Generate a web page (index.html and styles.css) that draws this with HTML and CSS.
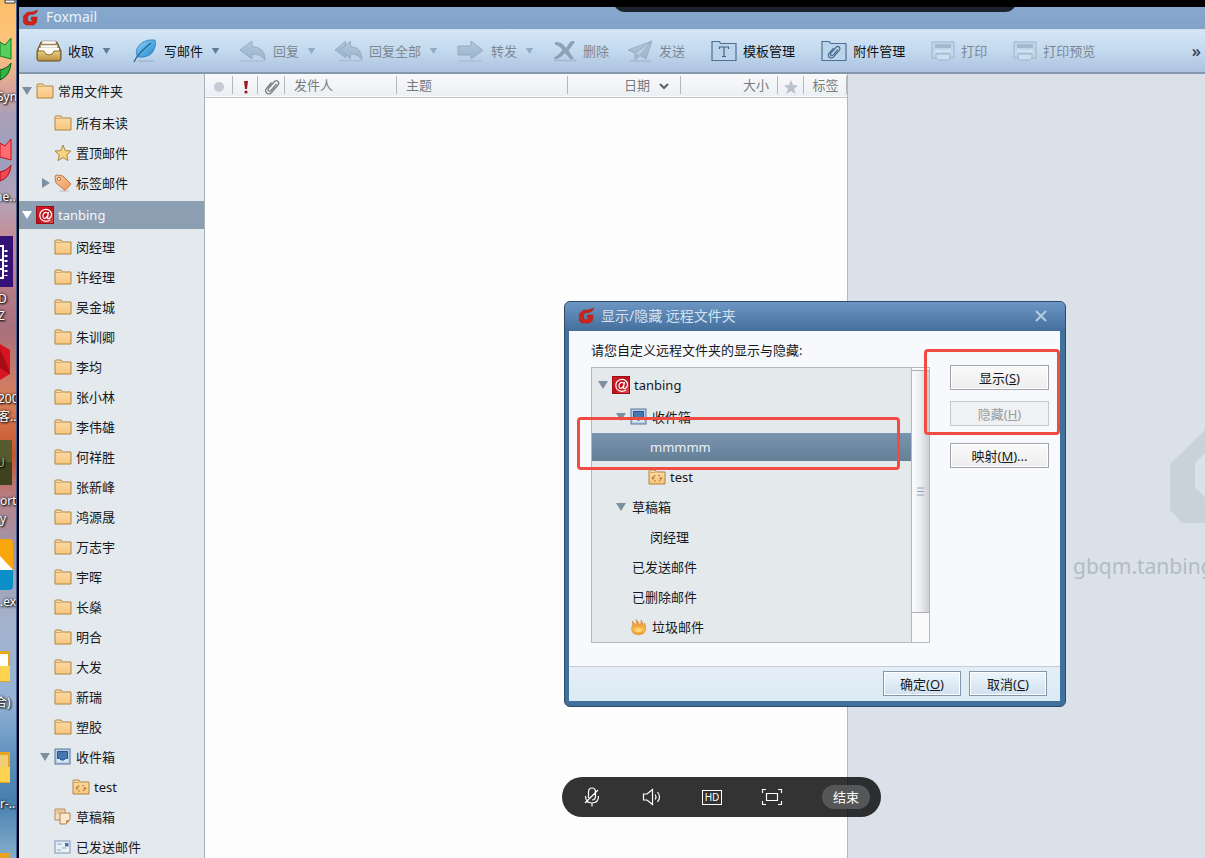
FILE: index.html
```html
<!DOCTYPE html>
<html lang="zh-CN">
<head>
<meta charset="utf-8">
<title>Foxmail</title>
<link rel="stylesheet" href="styles.css">
</head>
<body>
<svg class="defs" aria-hidden="true">
  <defs>
    <linearGradient id="gFolder" x1="0" y1="0" x2="0" y2="1"><stop offset="0" stop-color="#fbdda9"/><stop offset="1" stop-color="#f8c57e"/></linearGradient>
    <linearGradient id="gRed" x1="0" y1="0" x2="1" y2="1"><stop offset="0" stop-color="#d8202a"/><stop offset=".5" stop-color="#c00d18"/><stop offset="1" stop-color="#e0545a"/></linearGradient>
    <linearGradient id="gTray" x1="0" y1="0" x2="0" y2="1"><stop offset="0" stop-color="#e8cf86"/><stop offset="1" stop-color="#bd9440"/></linearGradient>
    <linearGradient id="gFeather" x1="0" y1="0" x2="1" y2="1"><stop offset="0" stop-color="#8fd4fa"/><stop offset="1" stop-color="#2284cc"/></linearGradient>
    <linearGradient id="gMute" x1="0" y1="0" x2="0" y2="1"><stop offset="0" stop-color="#b2c8dc"/><stop offset="1" stop-color="#9cb3ca"/></linearGradient>
    <linearGradient id="gTag" x1="0" y1="0" x2="1" y2="1"><stop offset="0" stop-color="#fbc596"/><stop offset="1" stop-color="#ee9a5c"/></linearGradient>
    <linearGradient id="gFire" x1="0" y1="0" x2="0" y2="1"><stop offset="0" stop-color="#dd8a3c"/><stop offset=".6" stop-color="#f9b945"/><stop offset="1" stop-color="#f3a52f"/></linearGradient>
  </defs>
  <symbol id="folder" viewBox="0 0 18 16"><path d="M1 15V2Q1 1 2 1H7L8.500 3H17V15Z" fill="url(#gFolder)" stroke="#b08343"/><path d="M2 3.500H7.500" stroke="#d7a65c"/></symbol>
  <symbol id="syncfolder" viewBox="0 0 18 16"><use href="#folder"/><path d="M5 9Q5 7 7.500 6.500M6 12H8M13 8.500Q13 11 11 12M10 6.500H12" fill="none" stroke="#b98239" stroke-width="1.200"/><path d="M3.200 8.500H6.800L5 11zM11.200 10H14.800L13 7.500z" fill="#b98239"/></symbol>
  <symbol id="star" viewBox="0 0 18 18"><path d="M9 1.200L11.300 6.600 17 7.100 12.700 10.900 14 16.600 9 13.600 4 16.600 5.300 10.900 1 7.100 6.700 6.600Z" fill="#f9d382" stroke="#a98540"/></symbol>
  <symbol id="tag" viewBox="0 0 18 18"><ellipse cx="10" cy="17" rx="6" ry=".8" fill="#c5ccd3"/><path d="M1 3Q1 1 3 1L9 2 17 10 11 16.500 2 9Z" fill="url(#gTag)" stroke="#c47a42"/><circle cx="5" cy="5" r="1.700" fill="#e4e8ee" stroke="#c47a42"/></symbol>
  <symbol id="account" viewBox="0 0 18 18"><rect x=".5" y=".5" width="17" height="17" fill="url(#gRed)" stroke="#9c0e16"/><path d="M12.500 6L11.500 11.500Q11.500 13 13 12.500 16 11 15.500 7.500 14 3.200 9.800 3.300 4 3.900 3.800 9.500 4.100 15 9.800 15.300 12 15.300 14 14M12 8.500Q11.500 6 9.500 6.300 7 7 6.900 10 7.200 12.600 9 12.300 10.900 11.800 11.700 9.500" fill="none" stroke="#fff" stroke-width="1.200"/></symbol>
  <symbol id="inbox" viewBox="0 0 18 18"><rect x="1" y="1" width="15" height="15" fill="#b9cfe6" stroke="#56779c"/><path d="M3 3H14V14H3Z" fill="#d9e7f4"/><path d="M3.500 3.500H13.500V10.500H11.500L10 12H7L5.500 10.500H3.500Z" fill="#4676b0" stroke="#27548c"/></symbol>
  <symbol id="drafts" viewBox="0 0 18 18"><path d="M1 1H11V12H1Z" fill="#f4dcc0" stroke="#b98a57"/><path d="M2.500 3H9.500M2.500 5H6" stroke="#d8aa78"/><path d="M6 5H16V12L12 16H6Z" fill="#fbe6cf" stroke="#b5824c"/><path d="M16 12H12V16Z" fill="#cf9556"/></symbol>
  <symbol id="sent" viewBox="0 0 18 18"><rect x="1" y="3" width="15" height="12" fill="#e9f0f8" stroke="#7a94b3"/><path d="M3 6h5M3 12h4M8 10h4" stroke="#8fa6c0"/><rect x="11" y="5" width="3.500" height="3.500" fill="#44719f"/></symbol>
  <symbol id="fire" viewBox="0 0 18 18"><path d="M3.500 15.500Q.5 12 2 8.500 3.500 6 2 3 5 4.500 5.200 7.500 7.500 5 6 1.500 9.500 4 9 7.500 12 5 11 2 13.500 4.500 13 8 14.500 7 14.500 5 17.500 11 13.500 15.500 8.500 18 3.500 15.500Z" fill="url(#gFire)" stroke="#d38a38" stroke-width=".6"/><ellipse cx="8.500" cy="12" rx="3.800" ry="2" fill="#fdd27a"/></symbol>
  <symbol id="down" viewBox="0 0 10 8"><path d="M0 0H10L5 8Z" fill="currentColor"/></symbol>
  <symbol id="right" viewBox="0 0 10 10"><path d="M2 0L10 5 2 10Z" fill="currentColor"/></symbol>
  <symbol id="logo" viewBox="0 0 18 18"><path d="M16.500 1Q16 4.500 12 5.800H8.500L6 8V12L7.500 13.500H10.500L11.500 12 9.500 11.500 10 8.500H16L15.500 14 12.500 17H4L1.500 14.500V7.500L5.500 3.500 12 3Z" fill="#cf2218" stroke="#a8180f" stroke-width=".5"/></symbol>
  <symbol id="printer" viewBox="0 0 24 20"><path d="M1 1H23V17H18V13H6V17H1Z" fill="#c1d6e9" stroke="#9cb4cb"/><path d="M4 3H20V7H4Z" fill="#a3b9cc"/><path d="M4 9H20V11H4Z" fill="#d3e2f0"/><path d="M5 13H19V17L17 19H7L5 17Z" fill="#cddeee" stroke="#9cb4cb"/></symbol>
  <symbol id="clip" viewBox="0 0 16 16"><path d="M12.500 5L7 11.500Q5.300 13 4.300 11.500 3.500 10.300 5 8.700L10 3Q12 .7 13.900 2.300 15.700 4 13.800 6.300L7.500 13.500Q5 16 2.600 14 .6 12 2.500 9.300L7.500 3.500" fill="none" stroke="currentColor" stroke-width="1.300"/></symbol>
</svg>

<div class="screen">
  <aside class="desktop">
    <svg class="desktop-art" width="16" height="858" viewBox="0 0 16 858" aria-hidden="true">
      <path d="M5 0H15V3H5Z" fill="#f4f4f4" stroke="#333"/>
      <path d="M0 42L5 45 11 38V59L0 56Z" fill="#55cf5d" stroke="#127a22"/><path d="M0 70Q8 68 11 63 10 76 0 80Z" fill="#31b340" stroke="#08551a"/>
      <path d="M0 143L5 146 11 139V160L0 157Z" fill="#ff6d70" stroke="#c1121f"/><path d="M0 172Q8 170 11 165 10 178 0 181Z" fill="#f2494e" stroke="#b00d18"/>
      <rect x="-5" y="236" width="18" height="51" fill="#351277"/><path d="M0 246H3V278H0M0 260H3M0 269H3" fill="none" stroke="#fff" stroke-width="2"/><path d="M6 250V276" stroke="#fff" stroke-width="3" stroke-dasharray="2 3"/>
      <path d="M0 344L10 350V374L0 380Z" fill="#d71421"/><path d="M0 350Q5 358 10 374L0 368Z" fill="#a50c17"/>
      <path d="M0 440H12V485H0Z" fill="#3e421f"/><path d="M0 440H12V462H0Z" fill="#565b2e"/>
      <path d="M0 539H9Q13 539 13 543V571H0Z" fill="#f9a60d"/><path d="M0 556L13 570H0Z" fill="#fff"/><path d="M0 570H13V586Q13 590 9 590H0Z" fill="#0a8fc8"/>
      <path d="M0 651H10V682H0Z" fill="#e7a51f"/><path d="M0 654H8V668H0Z" fill="#fff"/><path d="M0 666H10V681H0Z" fill="#ffd34f"/>
      <path d="M0 752H10V783H0Z" fill="#e7a51f"/><path d="M0 755H8V768H0Z" fill="#f2cd78"/><path d="M0 767H10V782H0Z" fill="#ffd34f"/>
      <path d="M0 853H10V858H0Z" fill="#e7a51f"/>
    </svg>
    <span class="label l1">Syn</span><span class="label l2">ne...</span><span class="label l3">D<br>Z</span>
    <span class="label l4">200<br>客...</span><span class="label l5">U</span><span class="label l6">ort<br>y</span>
    <span class="label l7">.ex</span><span class="label l8">合)</span><span class="label l9">r-...</span>
  </aside>

  <main class="app">
    <header class="titlebar"><svg width="17" height="17"><use href="#logo"/></svg><h1>Foxmail</h1></header>

    <nav class="toolbar" aria-label="工具栏">
      <button class="tool"><svg width="26" height="22" viewBox="0 0 26 22"><path d="M5 2H21L25 11V19Q25 21 23 21H3Q1 21 1 19V11Z" fill="#a98a4e" stroke="#665029"/><path d="M6 1H20V4H6ZM4.500 5H21.500V8H4.500Z" fill="#fff" stroke="#9b8a69" stroke-width=".6"/><path d="M3 8H23V15H3Z" fill="#fffdf5"/><path d="M1.500 11H8Q9 15 13 15T18 11H24.500V19Q24.500 20.500 23 20.500H3Q1.500 20.500 1.500 19Z" fill="url(#gTray)" stroke="#8a6b31"/></svg><span>收取</span><svg class="caret" width="10" height="7"><use href="#down" width="9" height="6"/></svg></button>
      <button class="tool"><svg width="28" height="24" viewBox="0 0 28 24"><path d="M8 22H24" stroke="#93acc6"/><path d="M7 17Q4 9 13 3 19 0 25 1 27 7 22 14 17 19 8 18Z" fill="url(#gFeather)" stroke="#2277b8" stroke-width=".7"/><path d="M4 23Q8 14 21 4" fill="none" stroke="#1c5d93" stroke-width="1.200"/></svg><span>写邮件</span><svg class="caret" width="10" height="7"><use href="#down" width="9" height="6"/></svg></button>
      <button class="tool" disabled><svg width="28" height="22" viewBox="0 0 28 22"><path d="M2 21H26" stroke="#a3b8ce"/><path d="M1 10L13 1V6.500Q26 7 26 20 22 14 13 14V19Z" fill="url(#gMute)" stroke="#93acc5"/></svg><span>回复</span><svg class="caret" width="10" height="7"><use href="#down" width="9" height="6"/></svg></button>
      <button class="tool" disabled><svg width="28" height="22" viewBox="1 0 29 22"><path d="M6 21H29" stroke="#a3b8ce"/><path d="M12 1L1 10 12 18V15L5 10 12 5ZM6.500 10L17 1V6.500Q29 7 29 20 25 14 17 14V19Z" fill="url(#gMute)" stroke="#93acc5"/></svg><span>回复全部</span><svg class="caret" width="10" height="7"><use href="#down" width="9" height="6"/></svg></button>
      <button class="tool" disabled><svg width="28" height="22" viewBox="0 0 28 22"><path d="M1 21H25" stroke="#a3b8ce"/><path d="M1 6H14V1L26 10.500 14 19V15H1Z" fill="url(#gMute)" stroke="#93acc5"/></svg><span>转发</span><svg class="caret" width="10" height="7"><use href="#down" width="9" height="6"/></svg></button>
      <button class="tool" disabled><svg width="24" height="22" viewBox="0 0 24 22"><path d="M1 20.500H23" stroke="#a3b8ce" stroke-width="1.500"/><path d="M2 2Q9 1 13 8L17 2Q20 0 22 2L15.500 10.500Q18 15 21 18.500L17.500 19.500 12 13Q6 20 1 19 1 17 5 15L9.500 10Q6 5 2 5Z" fill="#8aa1b8"/></svg><span>删除</span></button>
      <button class="tool wide" disabled><svg width="26" height="22" viewBox="0 0 26 22"><path d="M3 21H24" stroke="#a3b8ce" stroke-width="1.500"/><path d="M1 10L25 1 19 19 13 15.500 8 20V13Z" fill="url(#gMute)" stroke="#98b0c8"/><path d="M8 13L25 1 13 15.500" fill="#b9cde0" stroke="#98b0c8"/></svg><span>发送</span></button>
      <button class="tool wide"><svg width="26" height="22" viewBox="0 0 26 22"><path d="M1 20.500V1.500H8L10 3.500H25V20.500Z" fill="#bcd5ea" stroke="#4c7194" stroke-width="1.200"/><path d="M8.500 9V7H17.500V9M13 7V16.500M11 16.500H15" fill="none" stroke="#3f6488" stroke-width="1.200"/></svg><span>模板管理</span></button>
      <button class="tool wide"><svg width="26" height="22" viewBox="0 0 26 22"><path d="M1 20.500V1.500H8L10 3.500H25V20.500Z" fill="#bcd5ea" stroke="#4c7194" stroke-width="1.200"/><g color="#3f6488"><use href="#clip" x="6" y="5" width="14" height="14"/></g></svg><span>附件管理</span></button>
      <button class="tool wide" disabled><svg width="24" height="20"><use href="#printer"/></svg><span>打印</span></button>
      <button class="tool" disabled><svg width="24" height="20"><use href="#printer"/></svg><span>打印预览</span></button>
      <button class="more" aria-label="更多">»</button>
    </nav>

    <div class="panes">
      <ul class="tree sidebar">
        <li class="row root"><svg class="tw"><use href="#down"/></svg><svg class="ic"><use href="#folder"/></svg>常用文件夹</li>
        <li class="row d1"><i class="tw"></i><svg class="ic"><use href="#folder"/></svg>所有未读</li>
        <li class="row d1"><i class="tw"></i><svg class="ic"><use href="#star"/></svg>置顶邮件</li>
        <li class="row d1"><svg class="tw side"><use href="#right"/></svg><svg class="ic"><use href="#tag"/></svg>标签邮件</li>
        <li class="row selected"><svg class="tw"><use href="#down"/></svg><svg class="ic"><use href="#account"/></svg>tanbing</li>
        <li class="row d1"><i class="tw"></i><svg class="ic"><use href="#folder"/></svg>闵经理</li>
        <li class="row d1"><i class="tw"></i><svg class="ic"><use href="#folder"/></svg>许经理</li>
        <li class="row d1"><i class="tw"></i><svg class="ic"><use href="#folder"/></svg>吴金城</li>
        <li class="row d1"><i class="tw"></i><svg class="ic"><use href="#folder"/></svg>朱训卿</li>
        <li class="row d1"><i class="tw"></i><svg class="ic"><use href="#folder"/></svg>李均</li>
        <li class="row d1"><i class="tw"></i><svg class="ic"><use href="#folder"/></svg>张小林</li>
        <li class="row d1"><i class="tw"></i><svg class="ic"><use href="#folder"/></svg>李伟雄</li>
        <li class="row d1"><i class="tw"></i><svg class="ic"><use href="#folder"/></svg>何祥胜</li>
        <li class="row d1"><i class="tw"></i><svg class="ic"><use href="#folder"/></svg>张新峰</li>
        <li class="row d1"><i class="tw"></i><svg class="ic"><use href="#folder"/></svg>鸿源晟</li>
        <li class="row d1"><i class="tw"></i><svg class="ic"><use href="#folder"/></svg>万志宇</li>
        <li class="row d1"><i class="tw"></i><svg class="ic"><use href="#folder"/></svg>宇晖</li>
        <li class="row d1"><i class="tw"></i><svg class="ic"><use href="#folder"/></svg>长燊</li>
        <li class="row d1"><i class="tw"></i><svg class="ic"><use href="#folder"/></svg>明合</li>
        <li class="row d1"><i class="tw"></i><svg class="ic"><use href="#folder"/></svg>大发</li>
        <li class="row d1"><i class="tw"></i><svg class="ic"><use href="#folder"/></svg>新瑞</li>
        <li class="row d1"><i class="tw"></i><svg class="ic"><use href="#folder"/></svg>塑胶</li>
        <li class="row d1"><svg class="tw"><use href="#down"/></svg><svg class="ic"><use href="#inbox"/></svg>收件箱</li>
        <li class="row d2"><i class="tw"></i><svg class="ic"><use href="#syncfolder"/></svg>test</li>
        <li class="row d1"><i class="tw"></i><svg class="ic"><use href="#drafts"/></svg>草稿箱</li>
        <li class="row d1"><i class="tw"></i><svg class="ic"><use href="#sent"/></svg>已发送邮件</li>
      </ul>

      <section class="mail-list">
        <table>
          <colgroup><col class="c-dot"><col class="c-flag"><col class="c-clip"><col class="c-from"><col><col class="c-date"><col class="c-size"><col class="c-star"><col class="c-tag"></colgroup>
          <thead><tr>
            <th class="mid"><svg width="12" height="12"><circle cx="6" cy="6" r="5" fill="#c5ccd3"/></svg></th>
            <th class="mid"><svg width="6" height="14"><path d="M1 1H5L4 9H2Z" fill="#a01522"/><circle cx="3" cy="12" r="1.600" fill="#a01522"/></svg></th>
            <th class="mid clip"><svg width="16" height="16"><use href="#clip"/></svg></th>
            <th>发件人</th><th>主题</th>
            <th class="end date">日期<svg width="10" height="7"><path d="M1 1L5 5 9 1" fill="none" stroke="#5c6166" stroke-width="2"/></svg></th>
            <th class="end">大小</th>
            <th class="mid"><svg width="14" height="14" viewBox="0 0 18 18"><path d="M9 0L11.600 6.400 18 7 13 11.200 14.800 18 9 14.300 3.200 18 5 11.200 0 7 6.400 6.400Z" fill="#b9c2cb"/></svg></th>
            <th class="mid">标签</th>
          </tr></thead>
        </table>
      </section>

      <section class="preview">
        <svg width="130" height="94" viewBox="0 0 130 94"><path d="M36 0H130V94H12L0 81V35Z" fill="#c9d1d9"/><path d="M25 34L38 21H130V68H35L25 59Z" fill="#dae1e9"/></svg>
        <p>gbqm.tanbing</p>
      </section>
    </div>
  </main>

  <div class="top-tab"></div>

  <section class="dialog" role="dialog" aria-labelledby="dlg-title">
    <header class="dlg-head"><svg width="17" height="17"><use href="#logo"/></svg><h2 id="dlg-title">显示/隐藏 远程文件夹</h2>
      <button class="close" aria-label="关闭"><svg width="14" height="14"><path d="M2 2L12 12M12 2L2 12" stroke="#b4cce4" stroke-width="2"/></svg></button></header>
    <div class="dlg-body">
      <p>请您自定义远程文件夹的显示与隐藏:</p>
      <div class="dlg-cols">
        <div class="tree-box">
          <ul class="tree">
            <li class="row root"><svg class="tw"><use href="#down"/></svg><svg class="ic"><use href="#account"/></svg>tanbing</li>
            <li class="row d1"><svg class="tw"><use href="#down"/></svg><svg class="ic"><use href="#inbox"/></svg>收件箱</li>
            <li class="row d2 selected">mmmmm</li>
            <li class="row d2"><i class="tw"></i><svg class="ic"><use href="#syncfolder"/></svg>test</li>
            <li class="row d1"><svg class="tw"><use href="#down"/></svg>草稿箱</li>
            <li class="row d2"><i class="tw"></i>闵经理</li>
            <li class="row d1"><i class="tw"></i>已发送邮件</li>
            <li class="row d1"><i class="tw"></i>已删除邮件</li>
            <li class="row d1"><i class="tw"></i><svg class="ic"><use href="#fire"/></svg>垃圾邮件</li>
          </ul>
          <div class="scrollbar"><div class="thumb"><svg width="7" height="9"><path d="M0 1H7M0 4.500H7M0 8H7" stroke="#8ea3b8"/></svg></div></div>
        </div>
        <div class="dlg-actions">
          <button class="btn">显示(<u>S</u>)</button>
          <button class="btn" disabled>隐藏(<u>H</u>)</button>
          <button class="btn map">映射(<u>M</u>)...</button>
        </div>
      </div>
    </div>
    <footer class="dlg-foot"><button class="btn blue">确定(<u>O</u>)</button><button class="btn blue">取消(<u>C</u>)</button></footer>
  </section>

  <div class="mark mark-row"></div>
  <div class="mark mark-buttons"></div>

  <div class="callbar">
    <button aria-label="麦克风"><svg width="20" height="22" viewBox="0 0 20 22"><path d="M6.500 12V6Q6.500 2 10 2T13.500 6V10Q13.500 14 10 14M3.500 10Q3.500 17 10 17T16.500 10M10 17V20.500M3 17L16 4" /></svg></button>
    <button aria-label="扬声器"><svg width="20" height="20" viewBox="0 0 20 20"><path d="M1.500 7V13H5L10.500 17.500V2.500L5 7ZM13 7.500Q15 10 13 12.500M15.500 5Q19.500 10 15.500 15"/></svg></button>
    <button aria-label="高清" class="hd"><span>HD</span></button>
    <button aria-label="全屏"><svg width="22" height="18" viewBox="0 0 22 18"><path d="M1.500 5V1.500H5M17 1.500H20.500V5M20.500 13V16.500H17M5 16.500H1.500V13M5.500 5.500H16.500V12.500H5.500Z"/></svg></button>
    <button class="end-call">结束</button>
  </div>
</div>
</body>
</html>
```

FILE: styles.css
```css
* { box-sizing: border-box; }
body {
  margin: 0;
  font: 13px/20px "Noto Sans", "Noto Sans CJK SC", sans-serif;
  color: #15181c;
  background: #000;
}
h1, h2, p, ul { margin: 0; padding: 0; font-weight: normal; }
ul { list-style: none; }
button { font: inherit; color: inherit; border: 0; background: none; padding: 0; white-space: nowrap; }
svg { flex: none; display: block; }
.defs { position: absolute; width: 0; height: 0; }

.screen {
  position: relative;
  display: flex;
  height: 100vh;
  overflow: hidden;
}

/* Desktop strip behind the window */
.desktop {
  position: relative;
  flex: 0 0 17px;
  overflow: hidden;
  border-right: 1px solid #41639a;
  background: linear-gradient(#fbbf6a 0, #fdc47e 50px, #d9a29a 90px, #a9a0b8 115px, #9d9fbd 160px, #b3a4b8 200px, #c58c95 240px, #a9707c 330px, #d87f5c 400px, #c9552a 455px, #b5838c 500px, #9c9ab0 560px, #a5b2cc 620px, #94b3d6 700px, #5c8fbd 760px, #467fae 800px, #86aecb 858px);
}
.desktop-art { position: absolute; left: 0; top: 0; }
.label {
  position: absolute;
  font-size: 12px;
  line-height: 18px;
  color: #fff;
  text-shadow: 1px 1px 2px #000, 0 0 3px #000;
}
.l1 { left: -3px; top: 88px; }
.l2 { left: -5px; top: 188px; }
.l3 { left: -2px; top: 290px; line-height: 17px; }
.l4 { left: -2px; top: 390px; }
.l5 { left: -4px; top: 454px; color: #b5b36a; }
.l6 { left: 0; top: 492px; }
.l7 { left: 0; top: 593px; }
.l8 { left: -5px; top: 694px; }
.l9 { left: 0; top: 795px; }

/* Main window */
.app {
  flex: 1;
  min-width: 0;
  display: flex;
  flex-direction: column;
  border-left: 2px solid #000;
  border-top: 7px solid #000;
}
.titlebar {
  flex: 0 0 22px;
  display: flex;
  align-items: center;
  gap: 7px;
  padding: 0 3px 2px;
  background: linear-gradient(#88a9ce, #82a3c9);
}
.titlebar h1 { font-size: 14px; color: #e9f1f9; }
.toolbar {
  flex: 0 0 45px;
  display: flex;
  align-items: center;
  gap: 18px;
  padding: 0 4px 0 17px;
  overflow: hidden;
  border-top: 1px solid #d2dfec;
  border-bottom: 2px solid #8397ad;
  background: linear-gradient(#d5e6f6, #c3d9ee 50%, #adc3df);
}
.tool { display: flex; align-items: center; gap: 6px; flex: none; color: #0c1116; }
.tool:disabled { color: #7c8792; }
.tool.wide { padding-right: 8px; }
.caret { color: #5f7d99; margin-left: 2px; }
.tool:disabled .caret { color: #93adc6; }
.more { margin-left: auto; font-size: 16px; font-weight: 600; color: #3c4854; }

.panes {
  flex: 1;
  min-height: 0;
  display: grid;
  grid-template-columns: 186px 643fr 357fr;
}
.sidebar { overflow: hidden; border-right: 1px solid #a8b0b9; background: #e4e9ee; }

/* Folder trees */
.row {
  display: flex;
  align-items: center;
  height: 30px;
  padding-left: 3px;
  white-space: nowrap;
}
.row.root { height: 34px; }
.row.d1 { padding-left: 21px; }
.row.d2 { padding-left: 39px; }
.tw { width: 10px; height: 8px; margin-right: 4px; color: #7e909f; }
.tw.side { height: 10px; }
.ic { width: 18px; height: 18px; margin-right: 4px; }
.sidebar .selected {
  height: 28px;
  margin: 3px 0;
  color: #f4f7fa;
  background: linear-gradient(#8ea0b3, #8b9db0);
}
.selected .tw { color: #fff; }

/* Message list */
.mail-list { min-width: 0; background: #fdfdfd; border-right: 1px solid #b1b8bf; }
.mail-list table { width: 100%; table-layout: fixed; border-collapse: collapse; }
.mail-list thead { background: linear-gradient(#f8f9fb, #edf0f3); border-bottom: 1px solid #c0c4ca; }
.mail-list th {
  height: 23px;
  padding: 0 9px;
  font-weight: normal;
  text-align: left;
  color: #767b80;
  background: linear-gradient(#b4b8bd, #b4b8bd) right center / 1px 18px no-repeat;
}
.mail-list th.mid { padding: 0; text-align: center; }
.mail-list th.end { text-align: right; }
.mail-list th svg { display: inline-block; vertical-align: middle; }
.mail-list th.date { padding-right: 12px; }
.date svg { margin-left: 9px; }
.clip { color: #5c6166; }
.c-dot { width: 28px; }
.c-flag { width: 25px; }
.c-clip { width: 27px; }
.c-from { width: 112px; }
.c-date { width: 113px; }
.c-size { width: 97px; }
.c-star { width: 26px; }
.c-tag { width: 43px; }

/* Preview watermark */
.preview {
  min-width: 0;
  overflow: hidden;
  padding-top: 355px;
  background: #dae1e9;
}
.preview svg { margin-left: 322px; }
.preview p { margin: 28px 0 0 225px; font-size: 21px; line-height: 30px; color: #b3bcc6; }

.top-tab {
  position: absolute;
  left: 613px;
  top: 0;
  width: 404px;
  height: 12px;
  border-radius: 0 0 14px 14px;
  background: linear-gradient(#000 7px, #1a232c 7px);
}

/* Dialog */
.dialog {
  position: absolute;
  left: 564px;
  top: 301px;
  width: 502px;
  border: 1px solid #2d4c6c;
  border-radius: 6px;
  padding: 0 5px 5px 4px;
  background: #42709d;
  overflow: hidden;
}
.dlg-head {
  display: flex;
  align-items: center;
  gap: 6px;
  height: 29px;
  margin: 0 -5px 0 -4px;
  padding: 0 17px 2px 13px;
  background: linear-gradient(#6d96c4, #446e9b);
}
.dlg-head h2 { font-size: 14px; color: #d3e2f1; }
.close { margin-left: auto; }
.dlg-body { padding: 9px 9px 23px 22px; background: #f7f9fd; }
.dlg-cols { display: flex; gap: 20px; margin-top: 7px; }
.tree-box {
  flex: 1;
  display: flex;
  border: 1px solid #b4b8be;
  background: #e4e9ec;
}
.tree-box .tree { flex: 1; }
.tree-box .row { padding-left: 6px; }
.tree-box .row.d1 { padding-left: 24px; }
.tree-box .row.d2 { padding-left: 42px; }
.tree-box .tw { margin-right: 6px; }
.tree-box .ic { margin: 0 4px 0 -2px; }
.tree-box .selected {
  height: 28px;
  margin: 1px 0;
  color: #eaf0f6;
  background: linear-gradient(#7994b0, #667f97);
}
.tree-box .row.selected { padding-left: 58px; }
.scrollbar { flex: 0 0 18px; border-left: 1px solid #b4b8be; padding: 2px 0 29px; background: #fafafa; }
.thumb {
  display: flex;
  align-items: center;
  justify-content: center;
  height: 100%;
  border: solid #a9adb3;
  border-width: 1px 0;
  background: linear-gradient(90deg, #fbfcfd, #ebedf0 50%, #cbced3);
}
.dlg-actions { display: flex; flex-direction: column; flex: 0 0 101px; padding-right: 2px; gap: 11px; margin-top: -2px; }
.btn {
  height: 25px;
  border: 1px solid #a2a5a9;
  box-shadow: inset 0 0 0 1px #fff;
  background: linear-gradient(#fafafa, #ededee);
}
.btn:disabled { color: #989b9f; border-color: #c6c8cc; background: #f0f1f3; box-shadow: none; }
.btn.map { margin-top: 6px; }
.dlg-foot {
  display: flex;
  justify-content: flex-end;
  gap: 8px;
  height: 35px;
  padding: 4px 13px;
  border-top: 1px solid #c4ccd6;
  background: linear-gradient(#e5eef8, #dbeaf3);
}
.btn.blue { width: 78px; border-color: #8496a8; background: linear-gradient(#edf5fb, #d0e1ef); }

/* Annotations */
.mark { position: absolute; border: 3px solid #f04c42; border-radius: 4px; }
.mark-row { left: 577px; top: 417px; width: 323px; height: 53px; }
.mark-buttons { left: 924px; top: 349px; width: 136px; height: 86px; }

/* Meeting controls */
.callbar {
  position: absolute;
  left: 562px;
  top: 777px;
  display: flex;
  align-items: center;
  width: 319px;
  height: 40px;
  border-radius: 20px;
  background: rgba(0, 0, 0, .8);
  color: #fff;
}
.callbar button { width: 60px; display: flex; justify-content: center; align-items: center; }
.callbar path { fill: none; stroke: #fff; stroke-width: 1.2; }
.callbar .hd span { border: 1px solid #fff; width: 20px; font-size: 10px; line-height: 13px; text-align: center; }
.callbar .end-call { margin-left: 20px; width: 48px; height: 24px; border-radius: 12px; background: #555658; }
```
